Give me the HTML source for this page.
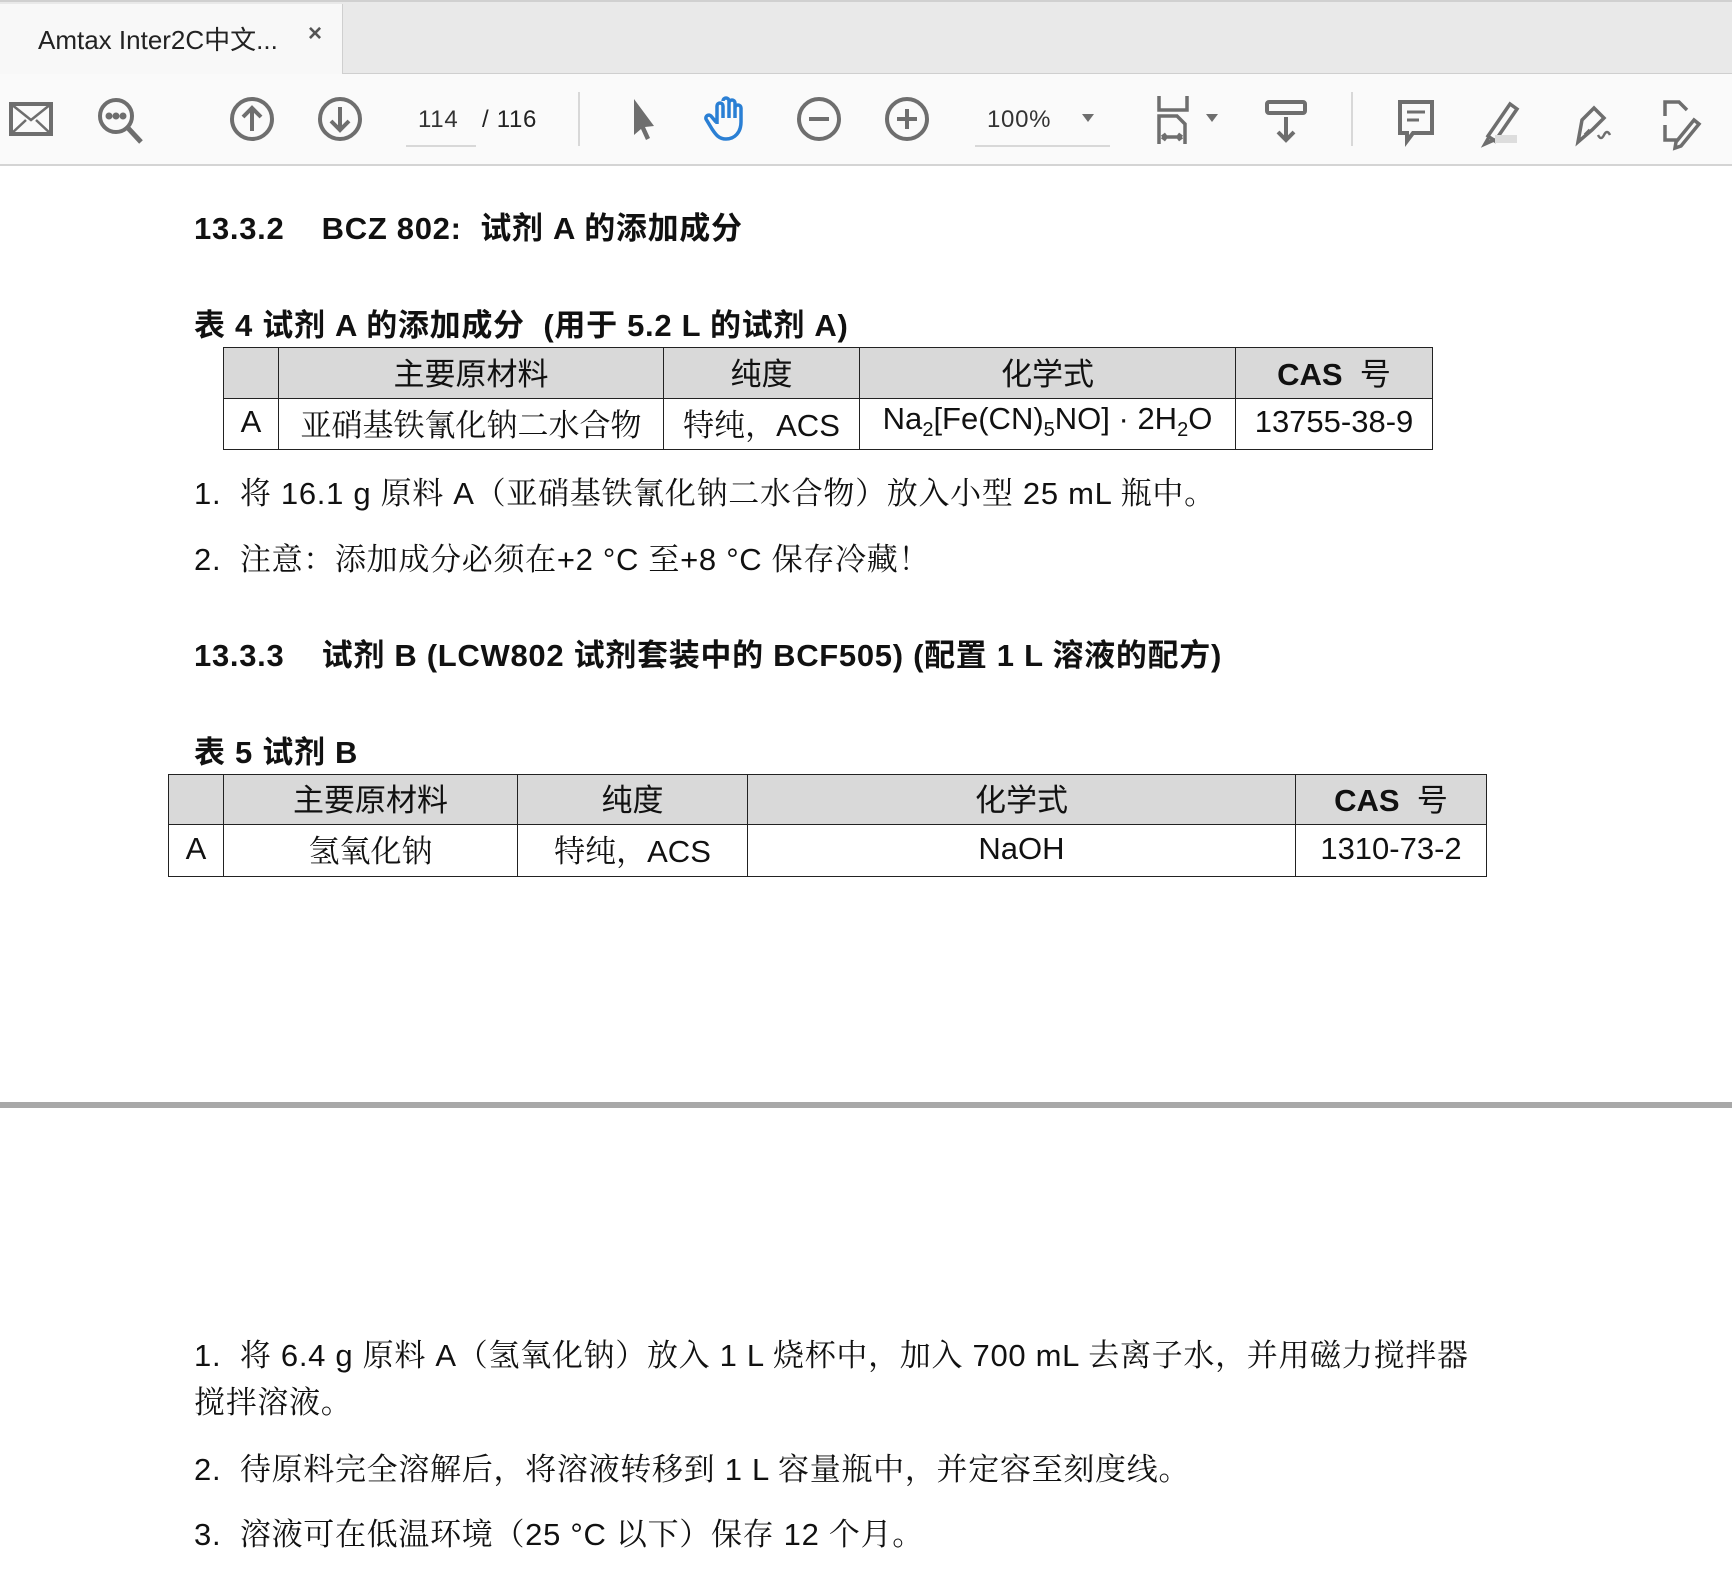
<!DOCTYPE html>
<html><head><meta charset="utf-8"><style>
*{margin:0;padding:0;box-sizing:border-box}
body{width:1732px;height:1569px;background:#fff;position:relative;overflow:hidden;font-family:"Liberation Sans","Noto Sans CJK SC",sans-serif;color:#111}
.tabbar{position:absolute;left:0;top:0;width:1732px;height:74px;background:#e9e9e9;border-top:2px solid #d0d0d0;border-bottom:1px solid #cfcfcf}
.tab{position:absolute;left:0;top:2px;width:343px;height:72px;background:#f8f8f8;border-right:1px solid #cfcfcf}
.tab span{position:absolute;left:38px;top:16px;font-size:26px;color:#222}
.tab b{position:absolute;left:308px;top:16px;font-size:24px;color:#555;font-weight:bold}
.tool{position:absolute;left:0;top:74px;width:1732px;height:92px;background:#fafafa;border-bottom:2px solid #d4d4d4}
.ic{position:absolute;top:96px}
.t{position:absolute;white-space:nowrap;letter-spacing:0.7px}
.s{font-family:"Liberation Sans","Noto Serif CJK SC",serif;font-size:31px}
.h{font-weight:bold;font-size:31px;font-family:"Liberation Sans","Noto Sans CJK SC",sans-serif}
table{position:absolute;border-collapse:collapse;font-size:31px;font-family:"Liberation Sans","Noto Serif CJK SC",serif}
td{border:1.5px solid #222;text-align:center;padding:0 0 4px 0}
tr.hd td{background:#d9d9d9;font-family:"Liberation Sans","Noto Sans CJK SC",sans-serif}
.sep{position:absolute;left:0;top:1102px;width:1732px;height:6px;background:#a8a8a8}
</style></head><body>
<div class="tabbar"><div class="tab"><span>Amtax Inter2C中文...</span><b>×</b></div></div>
<div class="tool"></div>
<svg class="ic" style="left:0;top:74px" width="1732" height="92" viewBox="0 74 1732 92" fill="none" stroke="#6e6e6e" stroke-width="4">
<rect x="11" y="104" width="40" height="30"/><path d="M11 104l20 16 20-16M11 134l15-14M51 134l-15-14" stroke-width="2.5"/>
<circle cx="116" cy="116" r="16"/><path d="M128 128l13 14" stroke-width="5"/><circle cx="109" cy="116" r="1.5" fill="#6e6e6e"/><circle cx="116" cy="116" r="1.5" fill="#6e6e6e"/><circle cx="123" cy="116" r="1.5" fill="#6e6e6e"/>
<circle cx="252" cy="119" r="20"/><path d="M252 131v-23M243 117l9-9 9 9"/>
<circle cx="340" cy="119" r="20"/><path d="M340 107v23M331 121l9 9 9-9"/>
<path d="M406 146h70M975 146h135" stroke="#ccc" stroke-width="1.5"/>
<path d="M579 92v54M1352 92v54" stroke="#ccc" stroke-width="1.5"/>
<path d="M634 99l0 36 7-6 5 11 4-2-5-11 9-1z" fill="#6e6e6e" stroke="none"/>
<path d="M717 124v-18a3 3 0 016 0v12m0-17a3 3 0 016 0v17m0-15a3 3 0 016 0v15m0-10a3 3 0 016 0v14c0 10-6 17-15 17-7 0-10-4-14-10l-6-10a3 3 0 015-3l5 6" stroke="#2a7fd4" stroke-width="3.5"/>
<circle cx="819" cy="119" r="20"/><path d="M809 119h20"/>
<circle cx="907" cy="119" r="20"/><path d="M897 119h20M907 109v20"/>
<path d="M1082 114l6 8 6-8z" fill="#6e6e6e" stroke="none"/>
<path d="M1159 96v14h28v-14M1159 144v-28h18l8 8v20M1162 137h20M1162 137l4-3M1162 137l4 3M1182 137l-4-3M1182 137l-4 3" stroke-width="3.5"/>
<path d="M1206 114l6 8 6-8z" fill="#6e6e6e" stroke="none"/>
<rect x="1267" y="102" width="38" height="11" rx="2"/><path d="M1286 117v23M1278 132l8 8 8-8"/>
<path d="M1400 102h32v31h-19l-6 8v-8h-7z"/><path d="M1407 112h18M1407 120h12" stroke-width="3"/>
<path d="M1488 136l22-32 7 5-22 32zM1485 144l4-7 5 3z" stroke-width="3.5"/><rect x="1495" y="135" width="22" height="8" fill="#ddd" stroke="none"/>
<path d="M1578 142l4-22 12-12 10 10-12 12zM1585 135l5-5" stroke-width="3.5"/><path d="M1598 135q3 6 6 0t6 0" stroke-width="2.5"/>
<path d="M1665 116v-14h14l8 8M1665 125v15h12M1676 142l18-22 5 4-18 22-6 2z" stroke-width="3.5"/>
</svg>
<div class="t" style="left:418px;top:106px;font-size:24px;color:#333">114</div>
<div class="t" style="left:482px;top:106px;font-size:24px;color:#222">/ 116</div>
<div class="t" style="left:987px;top:106px;font-size:24px;color:#333">100%</div>

<div class="t h" style="left:194px;top:203px">13.3.2&nbsp;&nbsp;&nbsp; BCZ 802:&nbsp; 试剂 A 的添加成分</div>
<div class="t h" style="left:194px;top:300px">表 4 试剂 A 的添加成分&nbsp; (用于 5.2 L 的试剂 A)</div>
<table style="left:223px;top:347px;width:1210px;height:103px">
<tr class="hd" style="height:51px"><td style="width:55px"></td><td style="width:385px">主要原材料</td><td style="width:196px">纯度</td><td style="width:376px">化学式</td><td style="font-weight:bold">CAS&nbsp; <span style="font-weight:normal">号</span></td></tr>
<tr><td>A</td><td>亚硝基铁氰化钠二水合物</td><td>特纯，ACS</td><td>Na<sub style="font-size:20px">2</sub>[Fe(CN)<sub style="font-size:20px">5</sub>NO] · 2H<sub style="font-size:20px">2</sub>O</td><td>13755-38-9</td></tr>
</table>
<div class="t s" style="left:194px;top:468px">1.&nbsp; 将 16.1 g 原料 A（亚硝基铁氰化钠二水合物）放入小型 25 mL 瓶中。</div>
<div class="t s" style="left:194px;top:534px">2.&nbsp; 注意：添加成分必须在+2 °C 至+8 °C 保存冷藏！</div>
<div class="t h" style="left:194px;top:630px">13.3.3&nbsp;&nbsp;&nbsp; 试剂 B (LCW802 试剂套装中的 BCF505) (配置 1 L 溶液的配方)</div>
<div class="t h" style="left:194px;top:727px">表 5 试剂 B</div>
<table style="left:168px;top:774px;width:1319px;height:103px">
<tr class="hd" style="height:50px"><td style="width:55px"></td><td style="width:294px">主要原材料</td><td style="width:230px">纯度</td><td style="width:548px">化学式</td><td style="font-weight:bold">CAS&nbsp; <span style="font-weight:normal">号</span></td></tr>
<tr><td>A</td><td>氢氧化钠</td><td>特纯，ACS</td><td>NaOH</td><td>1310-73-2</td></tr>
</table>
<div class="sep"></div>
<div class="t s" style="left:194px;top:1330px">1.&nbsp; 将 6.4 g 原料 A（氢氧化钠）放入 1 L 烧杯中，加入 700 mL 去离子水，并用磁力搅拌器</div>
<div class="t s" style="left:194px;top:1377px">搅拌溶液。</div>
<div class="t s" style="left:194px;top:1444px">2.&nbsp; 待原料完全溶解后，将溶液转移到 1 L 容量瓶中，并定容至刻度线。</div>
<div class="t s" style="left:194px;top:1509px">3.&nbsp; 溶液可在低温环境（25 °C 以下）保存 12 个月。</div>
</body></html>
